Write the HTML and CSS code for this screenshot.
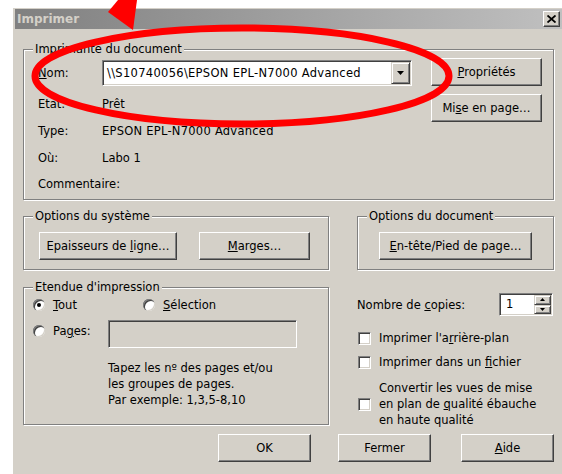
FILE: index.html
```html
<!DOCTYPE html>
<html lang="fr">
<head>
<meta charset="utf-8">
<title>Imprimer</title>
<link rel="stylesheet" href="styles.css">
</head>
<body>
<div class="dialog">
  <div class="titlebar">
    <span class="title">Imprimer</span>
    <span class="close">
      <svg width="9" height="8" viewBox="0 0 9 8"><path d="M0.5 0.5 L8.5 7.5 M8.5 0.5 L0.5 7.5" stroke="#000" stroke-width="1.8" fill="none"/></svg>
    </span>
  </div>
  <div class="content">
    <div class="group printer">
      <span class="group-title">Imprimante du document</span>
      <div class="printer-grid">
        <span class="lbl lbl-first"><u>N</u>om:</span>
        <div class="combo">
          <span class="combo-text">\\S10740056\EPSON EPL-N7000 Advanced</span>
          <span class="drop"><svg width="7" height="4" viewBox="0 0 7 4"><path d="M0 0 H7 L3.5 4 Z" fill="#000"/></svg></span>
        </div>
        <button class="btn btn-props"><u>P</u>ropriétés</button>
        <span class="lbl">Etat:</span>
        <span class="val">Prêt</span>
        <button class="btn btn-page">Mi<u>s</u>e en page…</button>
        <span class="lbl">Type:</span>
        <span class="val val-type">EPSON EPL-N7000 Advanced</span>
        <span class="lbl">Où:</span>
        <span class="val">Labo 1</span>
        <span class="lbl lbl-wide">Commentaire:</span>
      </div>
    </div>

    <div class="lower">
      <div class="group sys">
        <span class="group-title">Options du système</span>
        <div class="btn-row">
          <button class="btn btn-lines">Epaisseurs de <u>l</u>igne…</button>
          <button class="btn btn-margins"><u>M</u>arges…</button>
        </div>
      </div>
      <div class="group doc">
        <span class="group-title">Options du document</span>
        <div class="btn-row">
          <button class="btn btn-header"><u>E</u>n-tête/Pied de page…</button>
        </div>
      </div>

      <div class="group range">
        <span class="group-title">Etendue d'impression</span>
        <div class="range-row">
          <label class="opt opt-all"><span class="radio checked"></span><span><u>T</u>out</span></label>
          <label class="opt"><span class="radio"></span><span><u>S</u>élection</span></label>
        </div>
        <div class="range-row pages-row">
          <label class="opt opt-pages"><span class="radio"></span><span>Pa<u>g</u>es:</span></label>
          <span class="field"></span>
        </div>
        <p class="hint">Tapez les nº des pages et/ou<br>les groupes de pages.<br>Par exemple: 1,3,5-8,10</p>
      </div>

      <div class="side">
        <div class="copies">
          <span>Nombre de <u>c</u>opies:</span>
          <div class="spin">
            <span class="spin-val">1</span>
            <span class="spin-btns">
              <span class="spin-btn"><svg width="5" height="3" viewBox="0 0 5 3"><path d="M0 3 H5 L2.5 0 Z" fill="#000"/></svg></span>
              <span class="spin-btn"><svg width="5" height="3" viewBox="0 0 5 3"><path d="M0 0 H5 L2.5 3 Z" fill="#000"/></svg></span>
            </span>
          </div>
        </div>
        <label class="check check-bg"><span class="box"></span><span>Imprimer l'a<u>r</u>rière-plan</span></label>
        <label class="check check-file"><span class="box"></span><span>Imprimer dans un <u>f</u>ichier</span></label>
        <label class="check check-draft"><span class="box"></span><span>Convertir les vues de mise<br>en plan de <u>q</u>ualité ébauche<br>en haute qualité</span></label>
      </div>
    </div>

    <div class="actions">
      <button class="btn btn-act">OK</button>
      <button class="btn btn-act btn-close">Fermer</button>
      <button class="btn btn-act btn-help"><u>A</u>ide</button>
    </div>
  </div>
</div>

<svg class="markup" width="562" height="474" viewBox="0 0 562 474">
  <ellipse cx="242" cy="76" rx="207" ry="48" fill="none" stroke="#ff0000" stroke-width="7"/>
  <polygon points="108,12 118,0 137,0 133,30" fill="#ff0000"/>
</svg>
</body>
</html>
```

FILE: styles.css
```css
body {
  margin: 0;
  width: 562px;
  height: 474px;
  overflow: hidden;
  position: relative;
  background: #fff;
  font-family: "DejaVu Sans", sans-serif;
  font-size: 11.5px;
  color: #000;
}

u { text-decoration: underline; text-underline-offset: 1px; }

.dialog {
  box-sizing: border-box;
  width: 553px;
  height: 470px;
  margin: 7px 0 0 12px;
  padding: 1px 0 0 2px;
  background: #d4d0c8;
  border-top: 1px solid #fff;
  border-left: 1px solid #fff;
}

/* inactive caption */
.titlebar {
  height: 20px;
  display: flex;
  align-items: center;
  justify-content: space-between;
  padding-left: 2px;
  background: linear-gradient(to right, #808080, #c0c0c0);
}

.title {
  font-weight: bold;
  font-size: 12px;
  color: #d4d0c8;
}

.close {
  box-sizing: border-box;
  width: 17px;
  height: 16px;
  margin-right: 5px;
  display: flex;
  align-items: center;
  justify-content: center;
  background: #d4d0c8;
  border: 1px solid;
  border-color: #fff #404040 #404040 #fff;
  box-shadow: inset -1px -1px #808080;
}

.content {
  padding: 20px 0 0 8px;
}

/* etched group frame */
.group {
  position: relative;
  box-sizing: border-box;
  border: 1px solid #808080;
  box-shadow: inset 1px 1px #fff, 1px 1px #fff;
}

.group-title {
  position: absolute;
  top: -8px;
  left: 9px;
  padding: 0 2px;
  line-height: 15px;
  background: #d4d0c8;
  white-space: nowrap;
}

.printer {
  width: 531px;
  height: 151px;
}

.printer-grid {
  display: grid;
  grid-template-columns: 45px 310px 111px;
  grid-template-rows: 33px repeat(4, 26.67px);
  column-gap: 19px;
  padding: 8px 0 0 14px;
  align-items: center;
}

.lbl { grid-column: 1; white-space: nowrap; }
.val { grid-column: 2; white-space: nowrap; }
.lbl-wide { grid-column: 1 / span 2; }
.val-type { letter-spacing: 0.25px; }

.lbl-first {
  align-self: start;
  line-height: 26px;
  margin-top: 2px;
}

.combo {
  grid-column: 2;
  align-self: start;
  margin-top: 2px;
  box-sizing: border-box;
  height: 26px;
  display: flex;
  align-items: stretch;
  background: #fff;
  border: 1px solid;
  border-color: #808080 #fff #fff #808080;
  box-shadow: inset 1px 1px #404040, inset -1px -1px #d4d0c8;
  padding: 1px;
}

.combo-text {
  flex: 1;
  padding-left: 3px;
  line-height: 22px;
  letter-spacing: 0.3px;
  white-space: nowrap;
}

.drop {
  box-sizing: border-box;
  width: 19px;
  display: flex;
  align-items: center;
  justify-content: center;
  background: #d4d0c8;
  border: 1px solid;
  border-color: #d4d0c8 #404040 #404040 #d4d0c8;
  box-shadow: inset 1px 1px #fff, inset -1px -1px #808080;
}

/* raised push button */
.btn {
  box-sizing: border-box;
  height: 28px;
  padding: 0;
  font: inherit;
  color: #000;
  background: #d4d0c8;
  border: 1px solid;
  border-color: #fff #404040 #404040 #fff;
  box-shadow: inset -1px -1px #808080;
  white-space: nowrap;
}

.btn-props {
  grid-column: 3;
  grid-row: 1;
  align-self: start;
}

.btn-page {
  grid-column: 3;
  grid-row: 2;
  align-self: start;
  margin-top: 3px;
}

.lower {
  display: grid;
  grid-template-columns: 306px 197px;
  column-gap: 28px;
  row-gap: 17px;
  margin-top: 16px;
}

.sys, .doc { height: 54px; }

.btn-row {
  display: flex;
  gap: 22px;
  padding: 15px 0 0 15px;
}

.doc .btn-row { padding-left: 21px; }

.btn-lines { width: 138px; }
.btn-margins { width: 111px; }
.btn-header { width: 153px; }

.range { height: 138px; }

.range-row {
  display: flex;
  padding: 9px 0 0 9px;
  line-height: 16px;
}

.pages-row {
  padding-top: 7px;
  align-items: flex-start;
}

.opt {
  display: flex;
  align-items: center;
  gap: 8px;
}

.opt-all { width: 110px; }

.opt-pages {
  width: 75px;
  margin-top: 3px;
}

.radio {
  position: relative;
  width: 12px;
  height: 12px;
  border-radius: 50%;
  background: #fff;
  box-shadow: inset 1px 1px #808080, inset 2px 2px #404040, inset -1px -1px #d4d0c8;
}

.radio.checked::after {
  content: "";
  position: absolute;
  left: 4px;
  top: 4px;
  width: 4px;
  height: 4px;
  border-radius: 50%;
  background: #000;
}

.field {
  box-sizing: border-box;
  width: 189px;
  height: 28px;
  background: #d4d0c8;
  border: 1px solid;
  border-color: #808080 #fff #fff #808080;
  box-shadow: inset 1px 1px #404040, inset -1px -1px #d4d0c8;
}

.hint {
  margin: 12px 0 0;
  padding-left: 84px;
  line-height: 16px;
}

.side {
  display: flex;
  flex-direction: column;
}

.copies {
  display: flex;
  align-items: center;
  justify-content: space-between;
  height: 23px;
  margin-top: 6px;
  padding-right: 1px;
}

.spin {
  box-sizing: border-box;
  width: 54px;
  height: 23px;
  display: flex;
  background: #fff;
  border: 1px solid;
  border-color: #808080 #fff #fff #808080;
  box-shadow: inset 1px 1px #404040, inset -1px -1px #d4d0c8;
  padding: 1px;
}

.spin-val {
  flex: 1;
  padding-left: 5px;
  line-height: 19px;
}

.spin-btns {
  display: flex;
  flex-direction: column;
  width: 17px;
}

.spin-btn {
  flex: 1;
  box-sizing: border-box;
  display: flex;
  align-items: center;
  justify-content: center;
  background: #d4d0c8;
  border: 1px solid;
  border-color: #d4d0c8 #404040 #404040 #d4d0c8;
  box-shadow: inset 1px 1px #fff, inset -1px -1px #808080;
}

.check {
  display: flex;
  align-items: center;
  gap: 8px;
  padding-left: 1px;
  line-height: 16px;
}

.check-bg { margin-top: 14px; }
.check-file { margin-top: 8px; }
.check-draft { margin-top: 10px; }

.box {
  box-sizing: border-box;
  flex: none;
  width: 13px;
  height: 13px;
  background: #fff;
  border: 1px solid;
  border-color: #808080 #fff #fff #808080;
  box-shadow: inset 1px 1px #404040, inset -1px -1px #d4d0c8;
}

.actions {
  display: flex;
  justify-content: flex-end;
  width: 531px;
  margin-top: 6px;
}

.btn-act { width: 93px; }
.btn-close { margin-left: 27px; }
.btn-help { margin-left: 30px; }

.markup {
  position: absolute;
  left: 0;
  top: 0;
  pointer-events: none;
}
```
